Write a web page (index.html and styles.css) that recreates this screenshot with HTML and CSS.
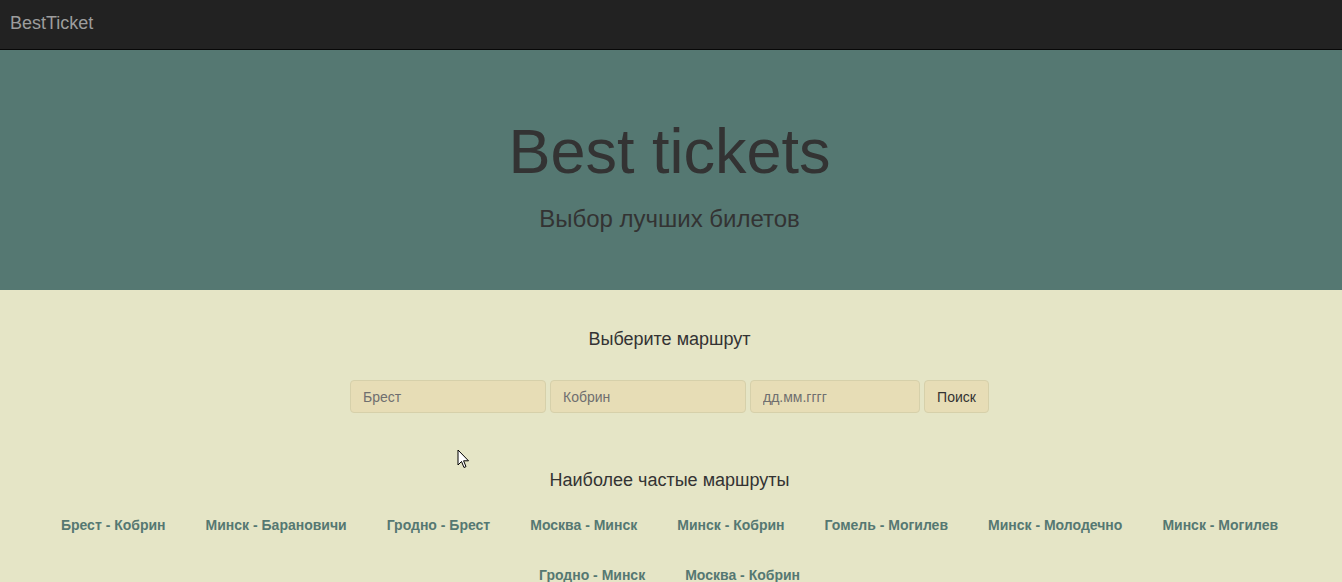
FILE: index.html
```html
<!DOCTYPE html>
<html lang="ru">
<head>
<meta charset="utf-8">
<title>BestTicket</title>
<link rel="stylesheet" href="styles.css">
</head>
<body>
<nav class="navbar">
  <a class="brand" href="#">BestTicket</a>
</nav>
<header class="jumbotron">
  <h1 class="title">Best tickets</h1>
  <p class="subtitle">Выбор лучших билетов</p>
</header>
<main class="content">
  <h2 class="section-title">Выберите маршрут</h2>
  <form class="search">
    <input class="field field-wide" type="text" placeholder="Брест">
    <input class="field field-wide" type="text" placeholder="Кобрин">
    <input class="field field-date" type="text" placeholder="дд.мм.гггг">
    <button class="btn" type="button">Поиск</button>
  </form>
  <h2 class="section-title popular-title">Наиболее частые маршруты</h2>
  <div class="routes">
    <a class="route" href="#">Брест - Кобрин</a>
    <a class="route" href="#">Минск - Барановичи</a>
    <a class="route" href="#">Гродно - Брест</a>
    <a class="route" href="#">Москва - Минск</a>
    <a class="route" href="#">Минск - Кобрин</a>
    <a class="route" href="#">Гомель - Могилев</a>
    <a class="route" href="#">Минск - Молодечно</a>
    <a class="route" href="#">Минск - Могилев</a>
    <a class="route" href="#">Гродно - Минск</a>
    <a class="route" href="#">Москва - Кобрин</a>
  </div>
</main>
<svg class="cursor" width="13" height="20" viewBox="0 0 13 20"><path d="M1 1 L1 16 L4.5 12.5 L7 18.5 L9 17.6 L6.6 11.8 L11.5 11.8 Z" fill="#fff" stroke="#000" stroke-width="1"/></svg>
</body>
</html>
```
FILE: styles.css
```css
html, body {
  margin: 0;
  padding: 0;
}
body {
  font-family: "Liberation Sans", Arial, sans-serif;
  font-size: 14px;
  color: #333;
  background: #e5e5c6;
  overflow: hidden;
}
.navbar {
  height: 49px;
  background: #222222;
  border-bottom: 1px solid #080808;
  display: flex;
  align-items: center;
  padding: 0 10px;
}
.brand {
  color: #9d9d9d;
  font-size: 18px;
  text-decoration: none;
  line-height: 20px;
  margin-top: -3px;
}
.jumbotron {
  background: #557872;
  height: 240px;
  box-sizing: border-box;
  padding: 67px 3px 0 0;
  text-align: center;
  color: #333;
}
.title {
  margin: 0;
  font-size: 63px;
  font-weight: 400;
  line-height: 69px;
}
.subtitle {
  margin: 18px 0 0;
  font-size: 24px;
  line-height: 30px;
}
.content {
  text-align: center;
  padding: 36px 3px 0 0;
}
.section-title {
  margin: 0;
  font-size: 18px;
  font-weight: 400;
  line-height: 26px;
  color: #333;
}
.search {
  display: flex;
  justify-content: center;
  gap: 4px;
  margin-top: 28px;
}
.field, .btn {
  box-sizing: border-box;
  height: 33px;
  background: #e7ddb6;
  border: 1px solid #d6d0aa;
  border-radius: 4px;
  font-family: inherit;
  font-size: 14px;
  color: #555;
}
.field {
  padding: 0 12px;
}
.field::placeholder {
  color: #6f6f6f;
}
.field-wide {
  width: 196px;
}
.field-date {
  width: 170px;
}
.btn {
  width: 65px;
  padding: 0;
  color: #333;
}
.popular-title {
  margin-top: 54px;
}
.routes {
  display: flex;
  flex-wrap: wrap;
  justify-content: center;
  column-gap: 40px;
  margin-top: 7px;
  padding: 0 20px;
}
.route {
  font-size: 14px;
  font-weight: 700;
  line-height: 50px;
  color: #557872;
  text-decoration: none;
}
.cursor {
  position: absolute;
  left: 457px;
  top: 449px;
}
```
